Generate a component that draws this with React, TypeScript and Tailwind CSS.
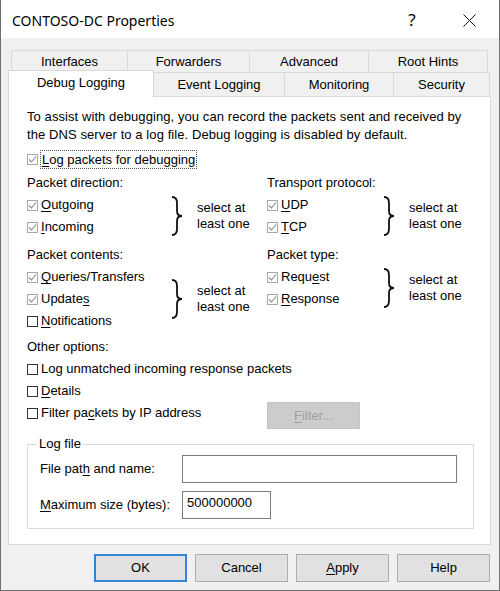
import type { ReactNode } from 'react';

const Check = ({ checked }: { checked: boolean }) => (
  <span
    className={`w-[11px] h-[11px] border shrink-0 flex items-center justify-center bg-white ${
      checked ? 'border-[#a8a8a8]' : 'border-[#333333]'
    }`}
  >
    {checked && (
      <svg width="9" height="9" viewBox="0 0 9 9">
        <path d="M1 4.5 L3.5 7 L8 1.5" fill="none" stroke="#8a8a8a" strokeWidth="1.1" />
      </svg>
    )}
  </span>
);

const Item = ({ checked, children }: { checked: boolean; children: ReactNode }) => (
  <div className="h-[22px] flex items-center gap-[3px]">
    <Check checked={checked} />
    <span>{children}</span>
  </div>
);

const Brace = () => (
  <svg width="13" height="40" viewBox="0 0 13 40" className="shrink-0">
    <path
      d="M2 1 C6 1 7 3 7 7 L7 15 C7 18 8 20 12 20 C8 20 7 22 7 25 L7 33 C7 37 6 39 2 39"
      fill="none"
      stroke="#111"
      strokeWidth="1.8"
    />
  </svg>
);

const Group = ({
  title,
  listWidth,
  children,
}: {
  title: string;
  listWidth: string;
  children: ReactNode;
}) => (
  <div>
    <div className="h-[22px] flex items-center">{title}</div>
    <div className="flex items-center">
      <div className={listWidth}>{children}</div>
      <Brace />
      <div className="ml-[14px] leading-[16px]">
        select at
        <br />
        least one
      </div>
    </div>
  </div>
);

const Tab = ({ label, className }: { label: string; className: string }) => (
  <div className={`flex items-center justify-center border-[#d9d9d9] bg-[#f0f0f0] ${className}`}>
    {label}
  </div>
);

const DialogButton = ({ children, primary }: { children: ReactNode; primary?: boolean }) => (
  <button
    className={`w-[93px] h-[28px] bg-[#e1e1e1] text-[13px] flex items-center justify-center ${
      primary ? 'border-2 border-[#2f86d8]' : 'border border-[#adadad]'
    }`}
  >
    {children}
  </button>
);

export default function App() {
  return (
    <div className="w-[500px] h-[591px] border-x border-b border-[#707070] flex flex-col text-[13px] text-black font-['Liberation_Sans',Arial,sans-serif] overflow-hidden">
      {/* Title bar */}
      <div className="h-[38px] shrink-0 bg-white flex items-center pl-[11px] pr-[7px] pt-[2px]">
        <span className="text-[14px] font-['Noto_Sans',sans-serif]">CONTOSO-DC Properties</span>
        <div className="ml-auto flex gap-[11px]">
          <span className="w-[46px] text-center text-[17px] font-['Noto_Sans',sans-serif]">?</span>
          <span className="w-[46px] flex items-center justify-center">
            <svg width="13" height="13" viewBox="0 0 13 13">
              <path d="M0.5 0.5 L12.5 12.5 M12.5 0.5 L0.5 12.5" stroke="#111" strokeWidth="1" />
            </svg>
          </span>
        </div>
      </div>

      {/* Body */}
      <div className="flex-1 bg-[#f0f0f0] px-[7px] pt-[12px]">
        {/* Tabs */}
        <div className="flex ml-[3px] h-[22px]">
          <Tab label="Interfaces" className="w-[116px] border-l border-t" />
          <Tab label="Forwarders" className="w-[122px] border-l border-t" />
          <Tab label="Advanced" className="w-[119px] border-l border-t" />
          <Tab label="Root Hints" className="w-[120px] border-x border-t" />
        </div>
        <div className="flex h-[24px]">
          <div className="relative z-10 -mt-[2px] h-[28px] w-[146px] shrink-0 bg-white border-x border-t border-[#d9d9d9] flex items-center justify-center pb-[4px]">
            Debug Logging
          </div>
          <Tab label="Event Logging" className="w-[131px] border-r border-t" />
          <Tab label="Monitoring" className="w-[109px] border-r border-t" />
          <Tab label="Security" className="w-[96px] border-r border-t" />
        </div>

        {/* Panel */}
        <div className="h-[449px] w-[483px] border border-[#d9d9d9] bg-white pl-[18px] pt-[11px]">
          <p className="leading-[18px] tracking-[0.08px]">
            To assist with debugging, you can record the packets sent and received by
            <br />
            the DNS server to a log file. Debug logging is disabled by default.
          </p>

          <div className="mt-[5px] h-[20px] flex items-center gap-[2px]">
            <Check checked />
            <span className="border border-dotted border-[#555] px-[1px] leading-[17px]">
              <u className="underline-offset-2">L</u>og packets for debugging
            </span>
          </div>

          <div className="mt-[3px] grid grid-cols-[240px_1fr]">
            <Group title="Packet direction:" listWidth="w-[143px]">
              <Item checked>
                <u className="underline-offset-2">O</u>utgoing
              </Item>
              <Item checked>
                <u className="underline-offset-2">I</u>ncoming
              </Item>
            </Group>
            <Group title="Transport protocol:" listWidth="w-[115px]">
              <Item checked>
                <u className="underline-offset-2">U</u>DP
              </Item>
              <Item checked>
                <u className="underline-offset-2">T</u>CP
              </Item>
            </Group>
          </div>

          <div className="mt-[6px] grid grid-cols-[240px_1fr] items-start">
            <Group title="Packet contents:" listWidth="w-[143px]">
              <Item checked>
                <u className="underline-offset-2">Q</u>ueries/Transfers
              </Item>
              <Item checked>
                Update<u className="underline-offset-2">s</u>
              </Item>
              <Item checked={false}>
                <u className="underline-offset-2">N</u>otifications
              </Item>
            </Group>
            <Group title="Packet type:" listWidth="w-[115px]">
              <Item checked>
                Requ<u className="underline-offset-2">e</u>st
              </Item>
              <Item checked>
                <u className="underline-offset-2">R</u>esponse
              </Item>
            </Group>
          </div>

          <div className="mt-[4px] h-[22px] flex items-center">Other options:</div>
          <Item checked={false}>Log unmatched incoming response packets</Item>
          <Item checked={false}>
            <u className="underline-offset-2">D</u>etails
          </Item>
          <div className="flex items-start">
            <div className="w-[240px]">
              <Item checked={false}>
                Filter pa<u className="underline-offset-2">c</u>kets by IP address
              </Item>
            </div>
            <button className="w-[93px] h-[27px] bg-[#cccccc] border border-[#c4c4c4] text-[#a0a0a0]">
              <u className="underline-offset-2">F</u>ilter...
            </button>
          </div>

          {/* Log file group */}
          <fieldset className="mt-[6px] w-[447px] border border-[#dcdcdc] px-[12px] pb-[9px]">
            <legend className="-ml-[3px] px-[2px] leading-[18px]">Log file</legend>
            <div className="mt-[2px] flex items-center">
              <span className="w-[142px]">
                File pat<u className="underline-offset-2">h</u> and name:
              </span>
              <div className="w-[275px] h-[28px] border border-[#7a7a7a] bg-white" />
            </div>
            <div className="mt-[8px] flex items-center">
              <span className="w-[142px]">
                <u className="underline-offset-2">M</u>aximum size (bytes):
              </span>
              <div className="w-[89px] h-[28px] border border-[#7a7a7a] bg-white pl-[4px] pt-[3px] leading-[16px]">
                500000000
              </div>
            </div>
          </fieldset>
        </div>

        {/* Buttons */}
        <div className="mt-[9px] ml-[86px] flex gap-[8px]">
          <DialogButton primary>OK</DialogButton>
          <DialogButton>Cancel</DialogButton>
          <DialogButton>
            <u className="underline-offset-2">A</u>pply
          </DialogButton>
          <DialogButton>Help</DialogButton>
        </div>
      </div>
    </div>
  );
}
